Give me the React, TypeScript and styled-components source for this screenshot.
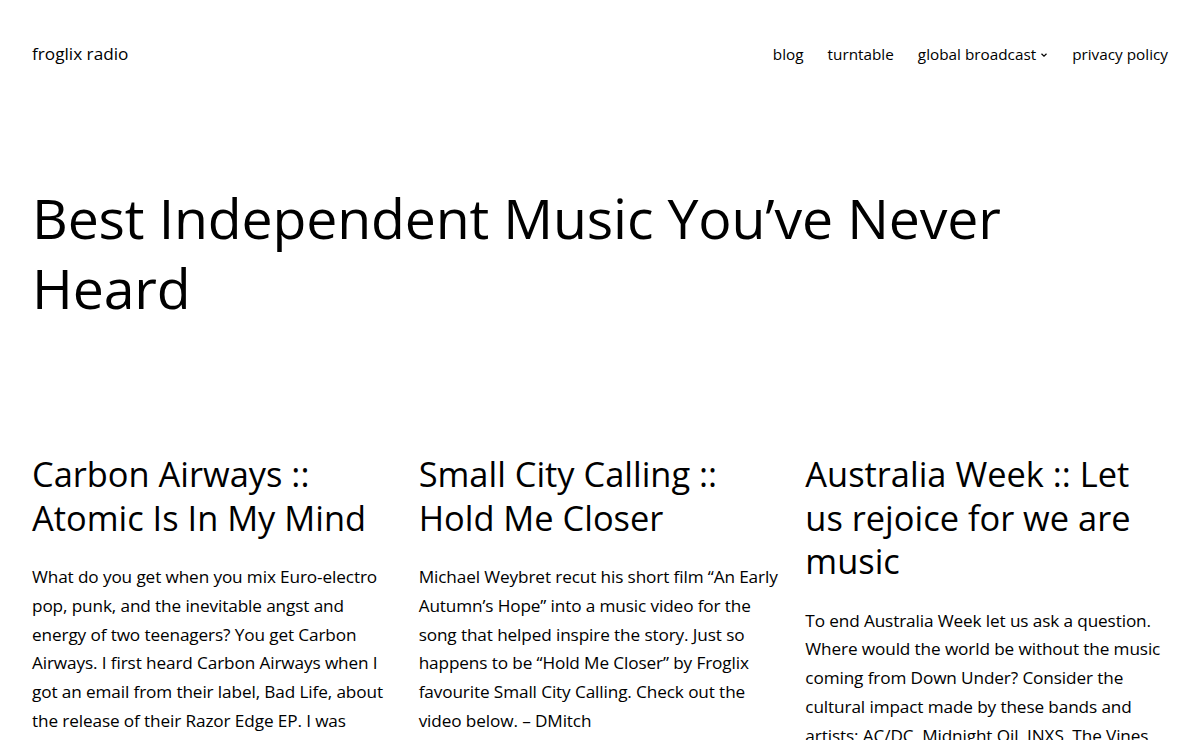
import React from 'react';
import styled, { createGlobalStyle } from 'styled-components';

const GlobalStyle = createGlobalStyle`
  html, body {
    margin: 0;
    padding: 0;
    background: #ffffff;
  }
  body {
    font-family: "Open Sans", "Noto Sans", sans-serif;
    color: #000000;
    -webkit-font-smoothing: antialiased;
  }
  * {
    box-sizing: border-box;
  }
`;

const Page = styled.div`
  padding: 0 32px;
`;

const Header = styled.header`
  display: flex;
  align-items: center;
  justify-content: space-between;
  padding-top: 40px;
  height: 68px;
`;

const SiteTitle = styled.a`
  font-size: 17.2px;
  line-height: 28px;
  color: #000;
  text-decoration: none;
`;

const Nav = styled.nav`
  display: flex;
  align-items: center;
  gap: 24px;
`;

const NavItem = styled.a`
  display: flex;
  align-items: center;
  gap: 4px;
  font-size: 15.3px;
  line-height: 28px;
  color: #000;
  text-decoration: none;
`;

const Chevron = styled.svg`
  width: 8px;
  height: 8px;
  margin-top: 1px;
`;

const Hero = styled.h1`
  margin: 115px 0 0;
  max-width: 1050px;
  font-size: 55.4px;
  font-weight: 400;
  line-height: 70px;
  letter-spacing: -0.15px;
`;

const Posts = styled.section`
  display: grid;
  grid-template-columns: repeat(3, 1fr);
  gap: 24px;
  margin-top: 129px;
`;

const Post = styled.article`
  display: flex;
  flex-direction: column;
  gap: 24px;
`;

const PostTitle = styled.h2`
  margin: 0;
  font-size: 34.4px;
  font-weight: 400;
  line-height: 43.5px;
`;

const Excerpt = styled.p`
  margin: 0;
  font-size: 17.2px;
  line-height: 28.8px;
  letter-spacing: -0.12px;
`;

const navLinks = [
  { label: 'blog' },
  { label: 'turntable' },
  { label: 'global broadcast', submenu: true },
  { label: 'privacy policy' },
];

const posts = [
  {
    title: 'Carbon Airways :: Atomic Is In My Mind',
    excerpt:
      'What do you get when you mix Euro-electro pop, punk, and the inevitable angst and energy of two teenagers? You get Carbon Airways. I first heard Carbon Airways when I got an email from their label, Bad Life, about the release of their Razor Edge EP. I was impressed by the energy and attitude of the band.',
  },
  {
    title: 'Small City Calling :: Hold Me Closer',
    excerpt:
      'Michael Weybret recut his short film “An Early Autumn’s Hope” into a music video for the song that helped inspire the story. Just so happens to be “Hold Me Closer” by Froglix favourite Small City Calling. Check out the video below. – DMitch',
  },
  {
    title: 'Australia Week :: Let us rejoice for we are music',
    excerpt:
      'To end Australia Week let us ask a question. Where would the world be without the music coming from Down Under? Consider the cultural impact made by these bands and artists: AC/DC, Midnight Oil, INXS, The Vines, Silverchair, Men at Work and so many more.',
  },
];

export default function App() {
  return (
    <>
      <GlobalStyle />
      <Page>
        <Header>
          <SiteTitle href="#">froglix radio</SiteTitle>
          <Nav>
            {navLinks.map((link) => (
              <NavItem key={link.label} href="#">
                {link.label}
                {link.submenu && (
                  <Chevron viewBox="0 0 8 8" aria-hidden="true">
                    <path d="M1.5 2.8 L4 5.2 L6.5 2.8" fill="none" stroke="#000" strokeWidth="1.2" />
                  </Chevron>
                )}
              </NavItem>
            ))}
          </Nav>
        </Header>

        <Hero>Best Independent Music You’ve Never Heard</Hero>

        <Posts>
          {posts.map((post) => (
            <Post key={post.title}>
              <PostTitle>{post.title}</PostTitle>
              <Excerpt>{post.excerpt}</Excerpt>
            </Post>
          ))}
        </Posts>
      </Page>
    </>
  );
}
